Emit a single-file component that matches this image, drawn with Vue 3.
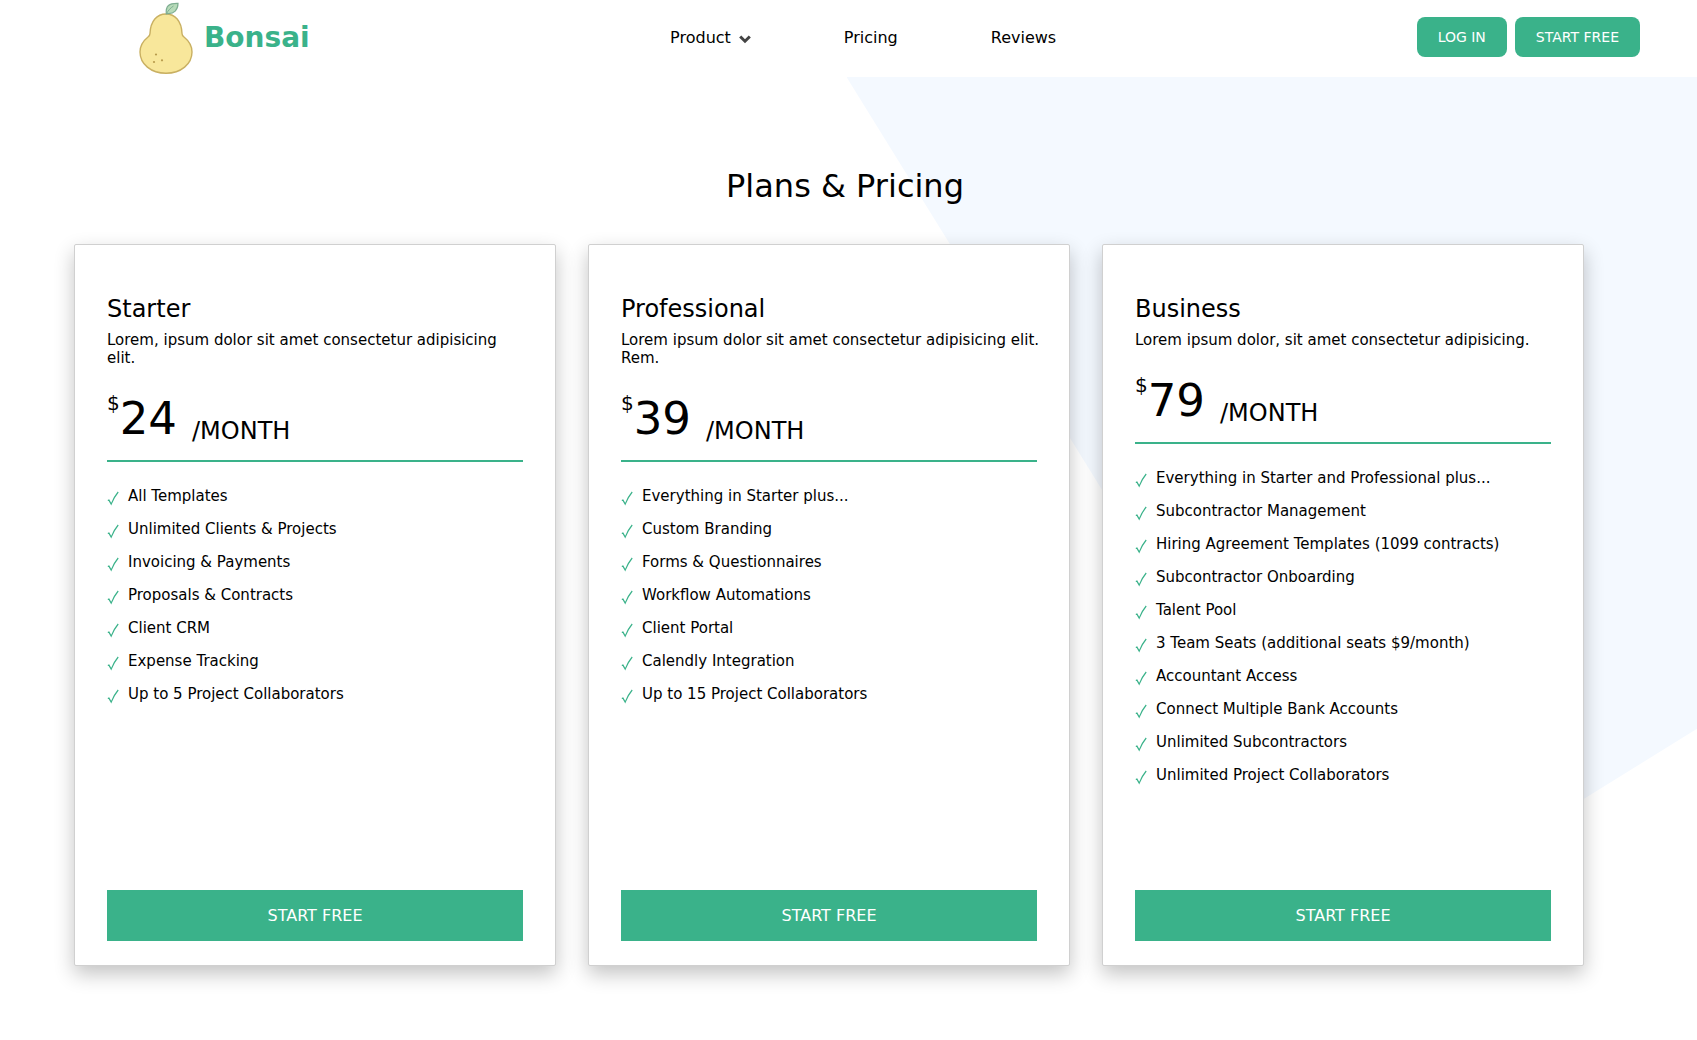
<script setup>
const plans = [
  {
    name: 'Starter',
    blurb: 'Lorem, ipsum dolor sit amet consectetur adipisicing elit.',
    price: 24,
    features: [
      'All Templates',
      'Unlimited Clients & Projects',
      'Invoicing & Payments',
      'Proposals & Contracts',
      'Client CRM',
      'Expense Tracking',
      'Up to 5 Project Collaborators',
    ],
  },
  {
    name: 'Professional',
    blurb: 'Lorem ipsum dolor sit amet consectetur adipisicing elit. Rem.',
    price: 39,
    features: [
      'Everything in Starter plus...',
      'Custom Branding',
      'Forms & Questionnaires',
      'Workflow Automations',
      'Client Portal',
      'Calendly Integration',
      'Up to 15 Project Collaborators',
    ],
  },
  {
    name: 'Business',
    blurb: 'Lorem ipsum dolor, sit amet consectetur adipisicing.',
    price: 79,
    features: [
      'Everything in Starter and Professional plus...',
      'Subcontractor Management',
      'Hiring Agreement Templates (1099 contracts)',
      'Subcontractor Onboarding',
      'Talent Pool',
      '3 Team Seats (additional seats $9/month)',
      'Accountant Access',
      'Connect Multiple Bank Accounts',
      'Unlimited Subcontractors',
      'Unlimited Project Collaborators',
    ],
  },
]
</script>

<template>
  <div class="page">
    <header class="topbar">
      <a class="brand" href="#">
        <svg class="pear" viewBox="0 0 54 74" aria-hidden="true">
          <path
            d="M27 14C36 14 42.500 21 43 33.500C43 35 43.500 35.800 45 37C50 41 53 46 53 52C53 64 42 73.300 27 73.300C12 73.300 1 64 1 52C1 46 4 41 9 37C10.500 35.800 11 35 11 33.500C11.500 21 18 14 27 14Z"
            fill="#f8e79b" stroke="#c9b062" stroke-width="1.400"
          />
          <path
            d="M27.300 14C26.500 6 30 3 39 3.300C39 10 35 14 28.500 13.500Z"
            fill="#b7dbb9" stroke="#7fae92" stroke-width="1.200"
          />
          <path d="M27.300 14C29 10.500 31.500 8 34.500 6" fill="none" stroke="#7fae92" stroke-width="1" />
          <g fill="#b89b4c">
            <circle cx="17" cy="54.500" r="1.100" />
            <circle cx="15" cy="62" r="1.100" />
            <circle cx="23" cy="60.300" r="1.100" />
          </g>
        </svg>
        <span>Bonsai</span>
      </a>

      <nav class="menu" aria-label="Main">
        <a href="#">
          Product
          <svg class="chevron" viewBox="0 0 12 9" aria-hidden="true">
            <path d="M1.200 1.500L6 6.200L10.800 1.500" fill="none" stroke="#444" stroke-width="3" />
          </svg>
        </a>
        <a href="#">Pricing</a>
        <a href="#">Reviews</a>
      </nav>

      <div class="actions">
        <button type="button">LOG IN</button>
        <button type="button">START FREE</button>
      </div>
    </header>

    <main class="content">
      <div class="backdrop" aria-hidden="true"></div>
      <h1>Plans &amp; Pricing</h1>
      <div class="plans">
        <section v-for="plan in plans" :key="plan.name" class="card">
          <h2>{{ plan.name }}</h2>
          <p class="blurb">{{ plan.blurb }}</p>
          <div class="price">
            <span class="currency">$</span>
            <span class="amount">{{ plan.price }}</span>
            <span class="period">/MONTH</span>
          </div>
          <ul class="features">
            <li v-for="feature in plan.features" :key="feature">
              <svg viewBox="0 0 12 20" aria-hidden="true">
                <path d="M0.800 14.500L1.900 14.100L4.200 18.100C6.100 13.300 8.200 9.600 11.200 6" />
              </svg>
              {{ feature }}
            </li>
          </ul>
          <button type="button" class="start">START FREE</button>
        </section>
      </div>
    </main>
  </div>
</template>

<style>
body {
  margin: 0;
  background: #fff;
}
</style>

<style scoped>
.page {
  font-family: "DejaVu Sans", Verdana, sans-serif;
  color: #000;
}

a {
  color: inherit;
  text-decoration: none;
}

button {
  border: 0;
  background: #3ab28a;
  color: #fff;
  font-family: inherit;
  cursor: pointer;
}

.topbar {
  display: flex;
  align-items: center;
  justify-content: space-between;
  height: 74px;
  padding: 0 57px 3px 139px;
}

.brand {
  display: flex;
  align-items: center;
  gap: 11px;
  color: #3ab28a;
  font-size: 28px;
  font-weight: 700;
}

.pear {
  width: 54px;
  height: 74px;
}

.menu {
  display: flex;
  gap: 93px;
  font-size: 16px;
}

.menu a {
  display: flex;
  align-items: center;
  gap: 8px;
}

.chevron {
  width: 12px;
  height: 9px;
  margin-top: 5px;
}

.actions {
  display: flex;
  gap: 8px;
}

.actions button {
  height: 40px;
  padding: 0 21px;
  border-radius: 8px;
  font-size: 14px;
}

.content {
  position: relative;
  padding: 90px 113px 72px 74px;
}

.backdrop {
  position: absolute;
  top: 0;
  right: 0;
  width: calc(50% + 2px);
  height: 852px;
  background: #f4f9ff;
  clip-path: polygon(0 0, 100% 0, 100% 76.500%, 62% 100%);
}

h1,
h2,
p,
ul {
  margin: 0;
  font-weight: 400;
}

h1 {
  position: relative;
  margin: 0 0 39px 32px;
  font-size: 32px;
  line-height: 38px;
  text-align: center;
}

.plans {
  position: relative;
  display: grid;
  grid-template-columns: repeat(3, 1fr);
  gap: 32px;
}

.card {
  display: flex;
  flex-direction: column;
  padding: 50px 32px 24px;
  border: 1px solid #d0d0d0;
  border-radius: 2px;
  background: #fff;
  box-shadow: 0 8px 20px rgba(0, 0, 0, 0.24);
}

h2 {
  font-size: 24px;
  line-height: 28px;
}

.blurb {
  margin: 8px -6px 0 0;
  font-size: 15px;
  line-height: 18px;
}

.price {
  display: flex;
  align-items: flex-end;
  margin-top: 24px;
  padding-bottom: 13px;
  border-bottom: 2px solid #3ab28a;
}

.currency {
  align-self: flex-start;
  font-size: 20px;
  line-height: 24px;
}

.amount {
  font-size: 45px;
  line-height: 56px;
}

.period {
  margin-left: 15px;
  font-size: 24px;
  line-height: 32px;
}

.features {
  display: flex;
  flex-direction: column;
  gap: 13px;
  margin: 24px 0 105px;
  padding: 0;
  list-style: none;
  font-size: 15px;
  line-height: 20px;
}

.features li {
  display: flex;
  gap: 9px;
}

.features svg {
  flex: none;
  width: 12px;
  height: 20px;
  fill: none;
  stroke: #3ab28a;
  stroke-width: 1.200;
}

.start {
  height: 51px;
  margin-top: auto;
  font-size: 16px;
}
</style>
